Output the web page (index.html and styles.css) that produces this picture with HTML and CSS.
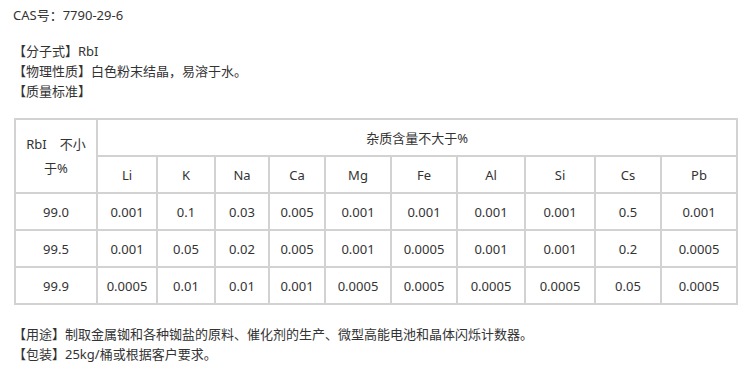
FILE: index.html
```html
<!DOCTYPE html>
<html lang="zh">
<head>
<meta charset="utf-8">
<title>RbI</title>
<link rel="stylesheet" href="styles.css">
</head>
<body>
<div class="page">
  <p class="cas">CAS号：7790-29-6</p>
  <div class="props">
    <p>【分子式】RbI</p>
    <p>【物理性质】白色粉末结晶，易溶于水。</p>
    <p>【质量标准】</p>
  </div>
  <table class="spec">
    <colgroup>
      <col style="width:82px"><col style="width:60px"><col style="width:58px"><col style="width:54px"><col style="width:56px"><col style="width:66px"><col style="width:66px"><col style="width:68px"><col style="width:70px"><col style="width:66px"><col style="width:76px">
    </colgroup>
    <tr>
      <td rowspan="2" class="head-main">RbI　不小<br>于%</td>
      <td colspan="10">杂质含量不大于%</td>
    </tr>
    <tr><td>Li</td><td>K</td><td>Na</td><td>Ca</td><td>Mg</td><td>Fe</td><td>Al</td><td>Si</td><td>Cs</td><td>Pb</td></tr>
    <tr><td>99.0</td><td>0.001</td><td>0.1</td><td>0.03</td><td>0.005</td><td>0.001</td><td>0.001</td><td>0.001</td><td>0.001</td><td>0.5</td><td>0.001</td></tr>
    <tr><td>99.5</td><td>0.001</td><td>0.05</td><td>0.02</td><td>0.005</td><td>0.001</td><td>0.0005</td><td>0.001</td><td>0.001</td><td>0.2</td><td>0.0005</td></tr>
    <tr><td>99.9</td><td>0.0005</td><td>0.01</td><td>0.01</td><td>0.001</td><td>0.0005</td><td>0.0005</td><td>0.0005</td><td>0.0005</td><td>0.05</td><td>0.0005</td></tr>
  </table>
  <div class="notes">
    <p>【用途】制取金属铷和各种铷盐的原料、催化剂的生产、微型高能电池和晶体闪烁计数器。</p>
    <p>【包装】25kg/桶或根据客户要求。</p>
  </div>
</div>
</body>
</html>
```

FILE: styles.css
```css
html, body {
  margin: 0;
  padding: 0;
  background: #ffffff;
}
body {
  font-family: "Noto Sans", "Noto Sans CJK SC", sans-serif;
  font-size: 13px;
  line-height: 20px;
  color: #333333;
}
.page {
  padding: 5px 0 0 13px;
}
p {
  margin: 0;
}
.cas {
  margin-bottom: 16px;
}
.props {
  margin-bottom: 17px;
}
.spec {
  border-collapse: collapse;
  table-layout: fixed;
  width: 722px;
  margin-left: 1px;
}
.spec td {
  border: 2px solid #d2d2d2;
  text-align: center;
  padding: 0;
  height: 35px;
  line-height: 20px;
}
.spec .head-main {
  line-height: 24px;
}
.notes {
  margin-top: 19px;
}
```
